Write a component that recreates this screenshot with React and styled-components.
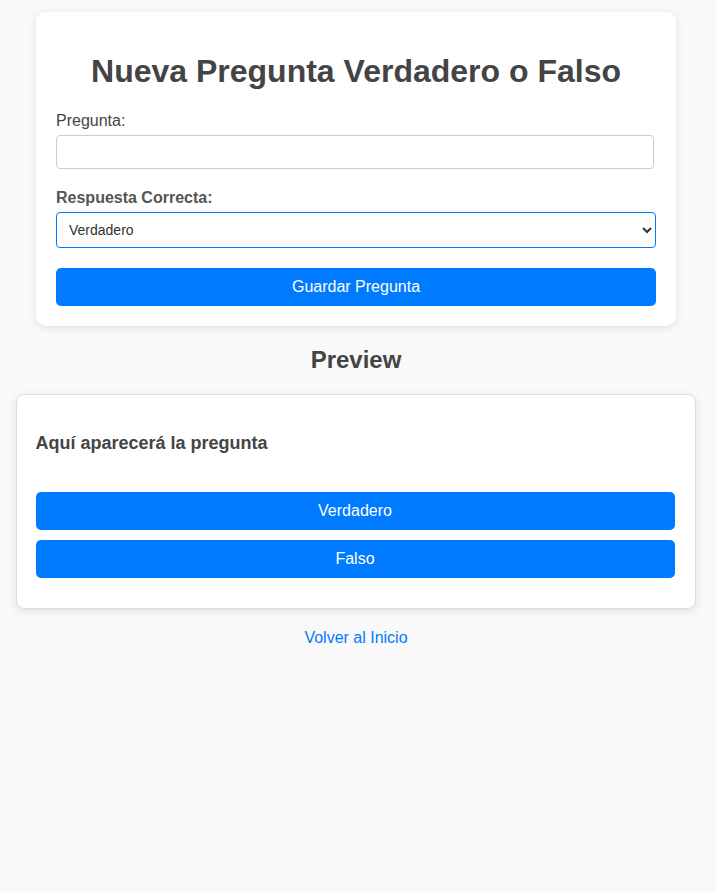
import styled, { createGlobalStyle } from 'styled-components'

const GlobalStyle = createGlobalStyle`
  body {
    margin: 0;
    background: #f9f9f9;
    font-family: 'Liberation Sans', Arial, sans-serif;
    color: #444;
  }
`

const Page = styled.div`
  padding: 12px 20px 40px 16px;
  display: flex;
  flex-direction: column;
  align-items: center;
`

const FormCard = styled.div`
  width: 640px;
  box-sizing: border-box;
  background: #fff;
  border-radius: 10px;
  padding: 20px;
  box-shadow: 0 2px 8px rgba(0, 0, 0, 0.1);
`

const Title = styled.h1`
  font-size: 32px;
  line-height: 37px;
  margin: 21px 0 22px;
  text-align: center;
  color: #444;
`

const Label = styled.label`
  display: block;
  font-size: 16px;
  line-height: 18px;
  margin-bottom: 5px;
  font-weight: ${(p) => (p.$bold ? 'bold' : 'normal')};
  color: ${(p) => (p.$bold ? '#555' : '#444')};
`

const Input = styled.input`
  display: block;
  width: 598px;
  height: 34px;
  box-sizing: border-box;
  border: 1px solid #ccc;
  border-radius: 4px;
  padding: 8px;
  font-family: inherit;
  font-size: 16px;
  margin-bottom: 20px;
`

const Select = styled.select`
  display: block;
  width: 100%;
  height: 36px;
  box-sizing: border-box;
  border: 1px solid #007bff;
  border-radius: 4px;
  padding: 0 8px;
  font-family: inherit;
  font-size: 14px;
  color: #333;
  background: #fff;
  margin-bottom: 20px;
  outline: none;
`

const Button = styled.button`
  display: block;
  width: 100%;
  height: 38px;
  border: none;
  border-radius: 5px;
  background: #007bff;
  color: #fff;
  font-family: inherit;
  font-size: 16px;
  cursor: pointer;
`

const SectionTitle = styled.h2`
  font-size: 24px;
  line-height: 28px;
  margin: 20px 0;
  text-align: center;
  color: #444;
`

const PreviewCard = styled.div`
  width: 680px;
  box-sizing: border-box;
  background: #fff;
  border: 1px solid #ddd;
  border-radius: 8px;
  padding: 20px 20px 30px 19px;
  box-shadow: 0 2px 8px rgba(0, 0, 0, 0.1);
  margin-right: 1px;
`

const QuestionText = styled.h3`
  font-size: 18px;
  line-height: 21px;
  margin: 18px 0 38px;
  color: #444;
`

const Options = styled.div`
  display: flex;
  flex-direction: column;
  gap: 10px;
`

const BackLink = styled.a`
  margin-top: 20px;
  font-size: 16px;
  line-height: 18px;
  color: #007bff;
  text-decoration: none;
`

export default function App() {
  return (
    <>
      <GlobalStyle />
      <Page>
        <FormCard>
          <Title>Nueva Pregunta Verdadero o Falso</Title>
          <Label htmlFor='pregunta'>Pregunta:</Label>
          <Input id='pregunta' type='text' />
          <Label $bold htmlFor='respuesta'>Respuesta Correcta:</Label>
          <Select id='respuesta' defaultValue='true'>
            <option value='true'>Verdadero</option>
            <option value='false'>Falso</option>
          </Select>
          <Button>Guardar Pregunta</Button>
        </FormCard>
        <SectionTitle>Preview</SectionTitle>
        <PreviewCard>
          <QuestionText>Aquí aparecerá la pregunta</QuestionText>
          <Options>
            <Button>Verdadero</Button>
            <Button>Falso</Button>
          </Options>
        </PreviewCard>
        <BackLink href='#'>Volver al Inicio</BackLink>
      </Page>
    </>
  )
}
